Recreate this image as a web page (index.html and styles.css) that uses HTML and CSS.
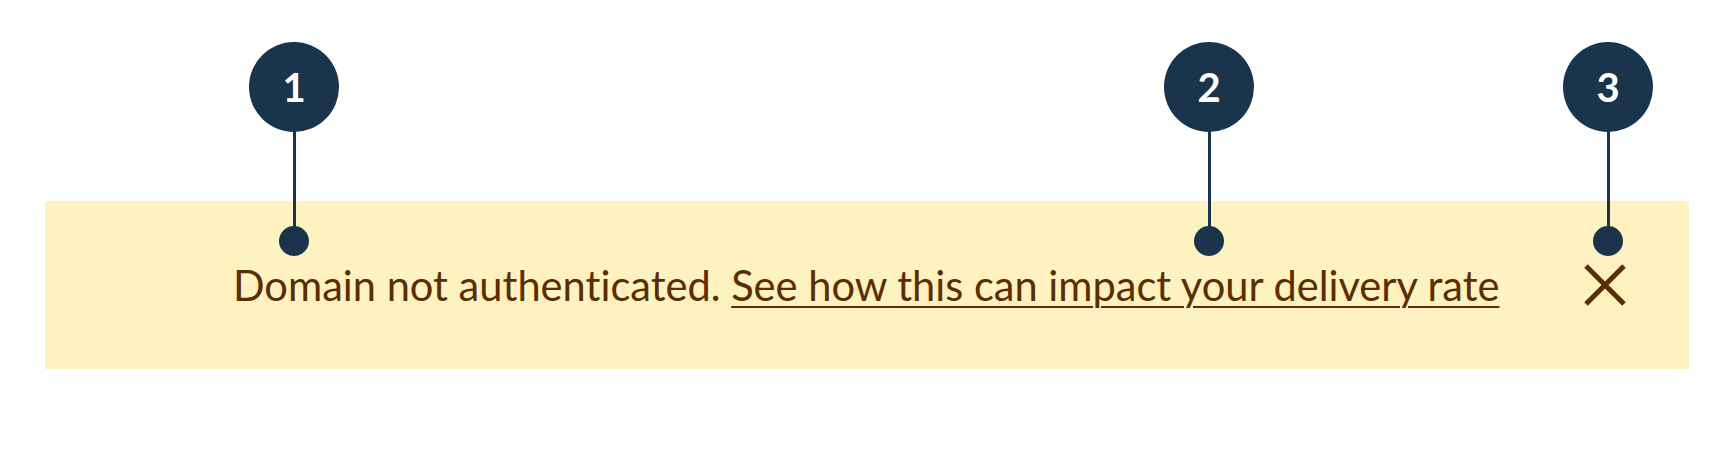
FILE: index.html
```html
<!DOCTYPE html>
<html lang="en">
<head>
<meta charset="utf-8">
<link rel="stylesheet" href="styles.css">
<title>Banner annotations</title>
</head>
<body>
<div class="stage">
  <div class="banner">
    <p class="message">Domain not authenticated. <a class="link" href="#">See how this can impact your delivery rate</a></p>
    <button class="close" aria-label="Dismiss">
      <svg width="42" height="42" viewBox="0 0 42 42"><path d="M2 2 L40 40 M40 2 L2 40" stroke="#5c2d00" stroke-width="5" fill="none"/></svg>
    </button>
  </div>

  <div class="callout c1"><span class="badge">1</span><span class="stem"></span><span class="dot"></span></div>
  <div class="callout c2"><span class="badge">2</span><span class="stem"></span><span class="dot"></span></div>
  <div class="callout c3"><span class="badge">3</span><span class="stem"></span><span class="dot"></span></div>
</div>
</body>
</html>
```

FILE: styles.css
```css
* { box-sizing: border-box; }
html, body { margin: 0; padding: 0; background: #fff; }
body { font-family: Lato, "Open Sans", sans-serif; }

.stage {
  position: relative;
  width: 1728px;
  height: 459px;
  padding: 201px 39px 0 45px;
}

.banner {
  height: 168px;
  background: #fef2c0;
  display: flex;
  align-items: center;
  padding: 0 63px 0 188px;
  color: #5c2d00;
}

.message {
  margin: 0;
  font-size: 41.6px;
  line-height: 52px;
  flex: 1;
  font-variant-ligatures: none;
  font-feature-settings: "liga" 0, "clig" 0;
}

.link { color: #5c2d00; text-decoration: underline; text-decoration-thickness: 2px; text-underline-offset: 5px; }

.close {
  border: 0;
  background: none;
  padding: 0;
  width: 42px;
  height: 42px;
  display: flex;
}

.callout {
  position: absolute;
  top: 42px;
  width: 90px;
  display: flex;
  flex-direction: column;
  align-items: center;
}
.c1 { left: 249px; }
.c2 { left: 1164px; }
.c3 { left: 1563px; }

.badge {
  width: 90px;
  height: 90px;
  border-radius: 50%;
  background: #1a344b;
  color: #fff;
  font-family: Lato, sans-serif;
  font-weight: 700;
  font-size: 40px;
  display: flex;
  align-items: center;
  justify-content: center;
}
.stem { width: 3px; height: 98px; margin-top: -2px; background: #1a344b; }
.dot { width: 30px; height: 30px; border-radius: 50%; background: #1a344b; margin-top: -2px; }
```
